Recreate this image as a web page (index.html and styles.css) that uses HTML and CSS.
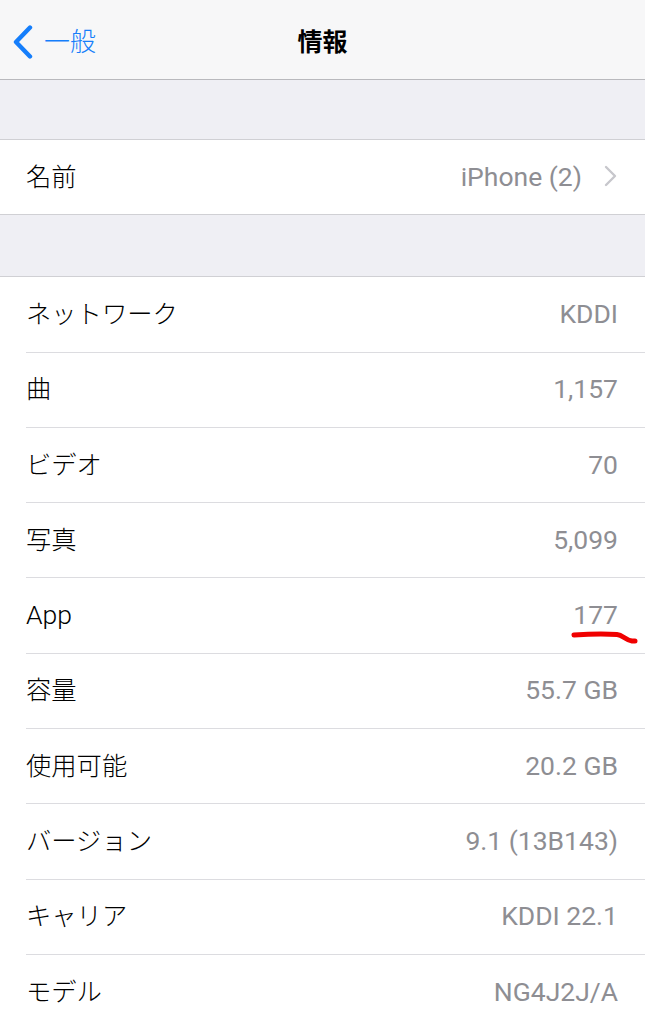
FILE: index.html
```html
<!DOCTYPE html>
<html lang="ja">
<head>
<meta charset="utf-8">
<link rel="stylesheet" href="styles.css">
</head>
<body>
<header class="nav">
  <div class="back">
    <svg class="back-icon" width="22" height="34" viewBox="0 0 22 34"><path d="M18 2.5 L4 17 L18 31.5" fill="none" stroke="#157efb" stroke-width="4.4" stroke-linecap="round" stroke-linejoin="round"/></svg>
    <span class="back-text">一般</span>
  </div>
  <div class="title">情報</div>
</header>
<div class="gap gap1"></div>
<section class="group">
  <div class="row last">
    <span class="label">名前</span>
    <span class="value">iPhone (2)
      <svg class="chev" width="14" height="22" viewBox="0 0 14 22"><path d="M2 2 L11 11 L2 20" fill="none" stroke="#c7c7cc" stroke-width="2.4" stroke-linecap="round" stroke-linejoin="round"/></svg>
    </span>
  </div>
</section>
<div class="gap gap2"></div>
<section class="group">
  <div class="row"><span class="label">ネットワーク</span><span class="value">KDDI</span></div>
  <div class="row"><span class="label">曲</span><span class="value">1,157</span></div>
  <div class="row"><span class="label">ビデオ</span><span class="value">70</span></div>
  <div class="row"><span class="label">写真</span><span class="value">5,099</span></div>
  <div class="row mark-row"><span class="label latin">App</span><span class="value">177</span>
    <svg class="mark" width="70" height="16" viewBox="0 0 70 16"><path d="M4 5 C18 4 34 3.5 47 4.5 C53 5 55 10 62 11 L65 11" fill="none" stroke="#f00000" stroke-width="5" stroke-linecap="round" stroke-linejoin="round"/></svg>
  </div>
  <div class="row"><span class="label">容量</span><span class="value">55.7 GB</span></div>
  <div class="row"><span class="label">使用可能</span><span class="value">20.2 GB</span></div>
  <div class="row"><span class="label">バージョン</span><span class="value">9.1 (13B143)</span></div>
  <div class="row"><span class="label">キャリア</span><span class="value">KDDI 22.1</span></div>
  <div class="row"><span class="label">モデル</span><span class="value">NG4J2J/A</span></div>
</section>
</body>
</html>
```
FILE: styles.css
```css
html, body {
  margin: 0;
  padding: 0;
}
body {
  width: 645px;
  height: 1024px;
  overflow: hidden;
  background: #efeff4;
  font-family: Roboto, "Noto Sans CJK JP", sans-serif;
  color: #000;
}
.nav {
  height: 79px;
  background: #f7f7f8;
  border-bottom: 1px solid #b9b9bd;
  display: flex;
  align-items: center;
  justify-content: center;
  position: relative;
}
.back {
  position: absolute;
  left: 12px;
  top: 25px;
  display: flex;
  align-items: center;
  gap: 10px;
}
.back-text {
  color: #157efb;
  font-size: 26px;
  line-height: 34px;
  font-weight: 300;
  font-family: "Noto Sans CJK JP", sans-serif;
  margin-top: -4px;
}
.title {
  font-size: 25px;
  font-weight: 700;
  font-family: "Noto Sans CJK JP", sans-serif;
  margin-top: 0;
}
.gap {
  background: #efeff4;
  border-bottom: 1px solid #d0d0d4;
}
.gap1 { height: 59px; }
.gap2 { height: 61px; }
.group {
  background: #fff;
}
.row {
  height: 74.3px;
  margin-left: 26px;
  padding-right: 27px;
  border-bottom: 1px solid #dcdce0;
  display: flex;
  align-items: center;
  justify-content: space-between;
  position: relative;
}
.row.last {
  margin-left: 0;
  padding-left: 26px;
  border-bottom: 1px solid #d0d0d4;
}
.label {
  font-family: "Noto Sans CJK JP", sans-serif;
  font-weight: 300;
  font-size: 25.3px;
  margin-top: -5px;
}
.label.latin {
  font-family: Roboto, sans-serif;
  font-weight: 300;
  font-size: 26.5px;
  margin-top: -2px;
}
.value {
  color: #8e8e93;
  font-size: 26.5px;
  display: flex;
  align-items: center;
  gap: 22px;
  margin-top: -2px;
}
.mark {
  position: absolute;
  right: 5px;
  top: 52px;
}
```
